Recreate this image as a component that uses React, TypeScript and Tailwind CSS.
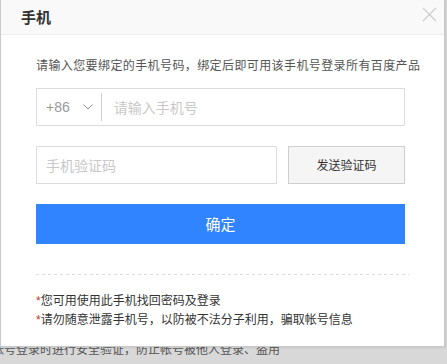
import React from "react";

const cjk = { fontFamily: '"Noto Sans CJK SC", "Noto Sans", sans-serif' };

export default function App() {
  return (
    <div
      className="relative w-[447px] h-[364px] overflow-hidden bg-[#d8d8d8]"
      style={cjk}
    >
      {/* underlying page text */}
      <div className="pt-[342px] ml-[-8px] whitespace-nowrap text-[12px] leading-[14px] text-[#555]">
        帐号登录时进行安全验证，防止帐号被他人登录、盗用
      </div>

      {/* dialog */}
      <div className="absolute left-0 top-[-1px] w-[445px] h-[348px] bg-white border border-[#c8c8c8] shadow-[1px_1px_2px_rgba(0,0,0,0.08)]">
        <div className="flex h-[35px] justify-between border-b border-[#ececec] bg-[#f9f9f9] pl-[20px] pr-[7px]">
          <div className="text-[15px] font-bold leading-[35px] text-[#333] mt-[-1px]">手机</div>
          <button className="mt-[7px] self-start w-[15px] h-[15px] flex items-center justify-center">
            <svg width="15" height="15" viewBox="0 0 15 15" fill="none">
              <path d="M1 1 L14 14 M14 1 L1 14" stroke="#cccccc" strokeWidth="1.1" />
            </svg>
          </button>
        </div>

        <div className="flex flex-col pl-[35px] pt-[21px]">
          <div className="whitespace-nowrap text-[12px] leading-[18px] tracking-[0.4px] text-[#555]">
            请输入您要绑定的手机号码，绑定后即可用该手机号登录所有百度产品
          </div>

          <div className="mt-[14px] flex h-[38px] w-[369px] items-center border border-[#dcdcdc]">
            <span
              className="ml-[9px] text-[14px] text-[#999]"
              style={{ fontFamily: '"Liberation Sans", Arial, sans-serif' }}
            >
              +86
            </span>
            <svg className="ml-[13px]" width="10" height="6" viewBox="0 0 10 6" fill="none">
              <path d="M0.5 0.5 L5 5 L9.5 0.5" stroke="#999" strokeWidth="1" />
            </svg>
            <div className="ml-[8px] h-[28px] w-px bg-[#ccc]" />
            <span className="ml-[12px] text-[14px] text-[#c8c8c8]">请输入手机号</span>
          </div>

          <div className="mt-[20px] flex w-[369px] justify-between">
            <div className="flex h-[38px] w-[241px] items-center border border-[#dcdcdc] pl-[9px] text-[14px] text-[#c8c8c8]">
              手机验证码
            </div>
            <button className="h-[38px] w-[117px] border border-[#cfcfcf] bg-[#f5f5f5] text-[12px] text-[#333]">
              发送验证码
            </button>
          </div>

          <button className="mt-[20px] h-[40px] w-[369px] bg-[#3084ff] text-[15px] text-white">
            确定
          </button>

          <div className="mt-[30px] h-px w-[373px] bg-[linear-gradient(to_right,#dddddd_50%,transparent_50%)] bg-[length:6px_1px]" />

          <div className="mt-[16px] text-[12px] leading-[18px] text-[#333]">
            <div>
              <span className="text-[#c0392b]" style={{ fontFamily: '"Liberation Sans", Arial, sans-serif' }}>*</span>
              您可用使用此手机找回密码及登录
            </div>
            <div>
              <span className="text-[#c0392b]" style={{ fontFamily: '"Liberation Sans", Arial, sans-serif' }}>*</span>
              请勿随意泄露手机号，以防被不法分子利用，骗取帐号信息
            </div>
          </div>
        </div>
      </div>
    </div>
  );
}
